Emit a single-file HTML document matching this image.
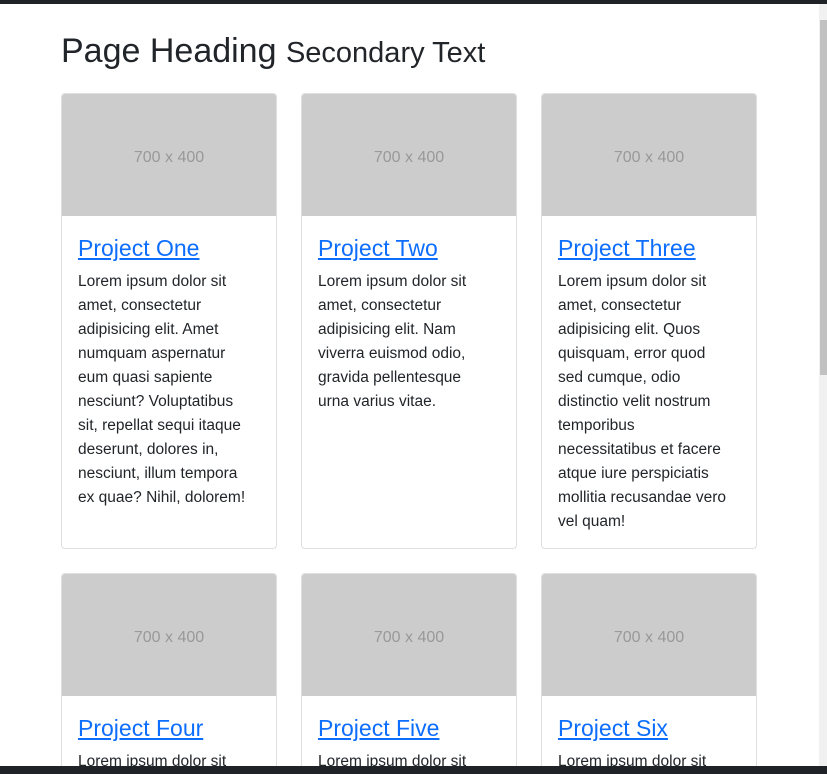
<!DOCTYPE html>
<html><head><style>
html,body{margin:0;padding:0;width:827px;height:774px;overflow:hidden;background:#fff;font-family:"Liberation Sans",sans-serif;color:#212529;position:relative}
.top{position:absolute;left:0;top:0;width:827px;height:4px;background:#1f2327}
.bot{position:absolute;left:0;top:766px;width:827px;height:8px;background:#1f2327}
.sb{position:absolute;left:819px;top:4px;width:8px;height:762px;background:#f1f1f1}
.th{position:absolute;left:820px;top:20px;width:7px;height:355px;background:#c1c1c1}
h1{position:absolute;left:61px;top:29px;margin:0;font-size:34px;font-weight:500;line-height:44px;white-space:nowrap}
h1 small{font-size:29px}
.card{position:absolute;width:214px;border:1px solid #dfdfdf;border-radius:4px;overflow:hidden;background:#fff}
.img{height:122px;background:#ccc;color:#999;font-size:16px;text-align:center;line-height:128px}
.body{padding:17px 16px 16px}
.body a{display:block;color:#0d6efd;text-decoration:underline;font-size:23px;line-height:30px;margin-bottom:7px}
.body p{margin:0;font-size:15.5px;line-height:24px;white-space:nowrap}
</style></head><body>
<div class="top"></div>
<h1>Page Heading <small>Secondary Text</small></h1>
<div class="card" style="left:61px;top:93px;height:454px"><div class="img">700 x 400</div><div class="body"><a>Project One</a><p>Lorem ipsum dolor sit<br>amet, consectetur<br>adipisicing elit. Amet<br>numquam aspernatur<br>eum quasi sapiente<br>nesciunt? Voluptatibus<br>sit, repellat sequi itaque<br>deserunt, dolores in,<br>nesciunt, illum tempora<br>ex quae? Nihil, dolorem!</p></div></div>
<div class="card" style="left:301px;top:93px;height:454px"><div class="img">700 x 400</div><div class="body"><a>Project Two</a><p>Lorem ipsum dolor sit<br>amet, consectetur<br>adipisicing elit. Nam<br>viverra euismod odio,<br>gravida pellentesque<br>urna varius vitae.</p></div></div>
<div class="card" style="left:541px;top:93px;height:454px"><div class="img">700 x 400</div><div class="body"><a>Project Three</a><p>Lorem ipsum dolor sit<br>amet, consectetur<br>adipisicing elit. Quos<br>quisquam, error quod<br>sed cumque, odio<br>distinctio velit nostrum<br>temporibus<br>necessitatibus et facere<br>atque iure perspiciatis<br>mollitia recusandae vero<br>vel quam!</p></div></div>
<div class="card" style="left:61px;top:573px;height:195px"><div class="img">700 x 400</div><div class="body"><a>Project Four</a><p>Lorem ipsum dolor sit</p></div></div>
<div class="card" style="left:301px;top:573px;height:195px"><div class="img">700 x 400</div><div class="body"><a>Project Five</a><p>Lorem ipsum dolor sit</p></div></div>
<div class="card" style="left:541px;top:573px;height:195px"><div class="img">700 x 400</div><div class="body"><a>Project Six</a><p>Lorem ipsum dolor sit</p></div></div>
<div class="sb"></div><div class="th"></div>
<div class="bot"></div>
</body></html>
